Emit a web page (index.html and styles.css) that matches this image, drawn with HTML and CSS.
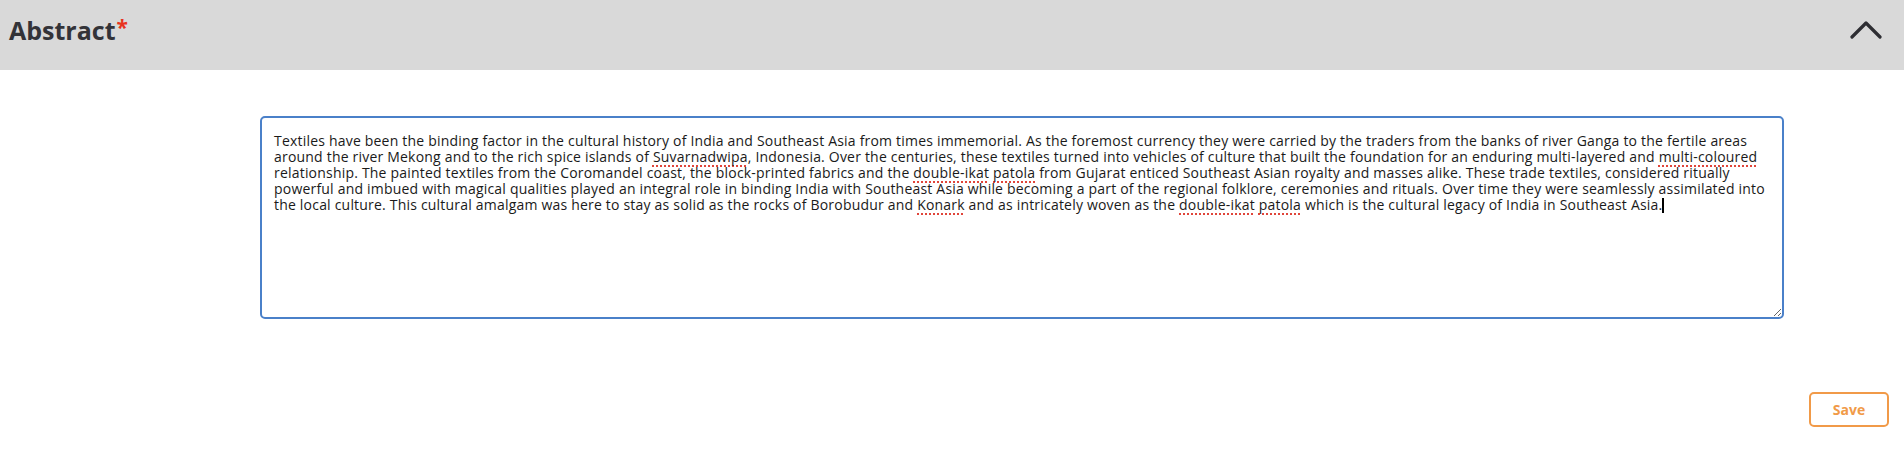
FILE: index.html
```html
<!DOCTYPE html>
<html lang="en">
<head>
<meta charset="utf-8">
<title>Abstract</title>
<link rel="stylesheet" href="styles.css">
</head>
<body>
<section class="panel">
  <header class="panel-header">
    <h2 class="panel-title">Abstract<span class="required">*</span></h2>
    <button class="collapse-btn" aria-label="Collapse">
      <svg width="32" height="20" viewBox="0 0 32 20"><polyline points="2,17 16,3 30,17" fill="none" stroke="#2e2e33" stroke-width="3.2" stroke-linecap="round" stroke-linejoin="round"/></svg>
    </button>
  </header>
  <div class="panel-body">
    <div class="field-row">
      <div class="textbox" contenteditable="true" spellcheck="false">Textiles have been the binding factor in the cultural history of India and Southeast Asia from times immemorial. As the foremost currency they were carried by the traders from the banks of river Ganga to the fertile areas around the river Mekong and to the rich spice islands of <span class="sp">Suvarnadwipa</span>, Indonesia. Over the centuries, these textiles turned into vehicles of culture that built the foundation for an enduring multi-layered and <span class="sp">multi-coloured</span> relationship. The painted textiles from the Coromandel coast, the block-printed fabrics and the <span class="sp">double-ikat</span> <span class="sp">patola</span> from Gujarat enticed Southeast Asian royalty and masses alike. These trade textiles, considered ritually powerful and imbued with magical qualities played an integral role in binding India with Southeast Asia while becoming a part of the regional folklore, ceremonies and rituals. Over time they were seamlessly assimilated into the local culture. This cultural amalgam was here to stay as solid as the rocks of Borobudur and <span class="sp">Konark</span> and as intricately woven as the <span class="sp">double-ikat</span> <span class="sp">patola</span> which is the cultural legacy of India in Southeast Asia.<span class="caret"></span></div>
    </div>
    <div class="actions">
      <button class="save-btn">Save</button>
    </div>
  </div>
</section>
</body>
</html>
```

FILE: styles.css
```css
html, body {
  margin: 0;
  padding: 0;
  background: #ffffff;
}
body {
  font-family: "Open Sans", "Liberation Sans", sans-serif;
  color: #222;
}
.panel-header {
  height: 70px;
  box-sizing: border-box;
  background: #d9d9d9;
  display: flex;
  justify-content: space-between;
  align-items: flex-start;
  padding: 13px 22px 0 9px;
}
.panel-title {
  margin: 0;
  font-family: "Open Sans", sans-serif;
  font-weight: 700;
  font-size: 25px;
  line-height: 34px;
  color: #333338;
  letter-spacing: 0;
}
.required {
  color: #e8321e;
  font-size: 21px;
  position: relative;
  top: -5px;
  margin-left: 1px;
}
.collapse-btn {
  border: 0;
  background: transparent;
  padding: 0;
  margin-top: 7px;
  width: 32px;
  height: 20px;
  display: block;
}
.collapse-btn svg { display: block; }
.panel-body {
  padding-top: 46px;
}
.field-row {
  padding-left: 260px;
  padding-right: 120px;
}
.textbox {
  box-sizing: border-box;
  width: 1524px;
  height: 203px;
  border: 2px solid #4a80c9;
  border-radius: 5px;
  padding: 15px 12px;
  font-family: "Open Sans", sans-serif;
  font-size: 14px;
  letter-spacing: 0.2px;
  line-height: 16px;
  color: #1a1a1a;
  resize: both;
  overflow: auto;
  outline: none;
}
.sp {
  text-decoration: underline dotted #e0453a;
  text-decoration-thickness: 1.5px;
  text-underline-offset: 3px;
}
.caret {
  display: inline-block;
  width: 1.5px;
  height: 15px;
  background: #000;
  vertical-align: -3px;
}
.actions {
  display: flex;
  justify-content: flex-end;
  padding-right: 15px;
  margin-top: 73px;
}
.save-btn {
  width: 80px;
  height: 35px;
  box-sizing: border-box;
  border: 2px solid #f19a48;
  border-radius: 5px;
  background: #fff;
  color: #f19a48;
  font-family: "Open Sans", sans-serif;
  font-weight: 700;
  font-size: 14px;
  padding: 0;
}
```
